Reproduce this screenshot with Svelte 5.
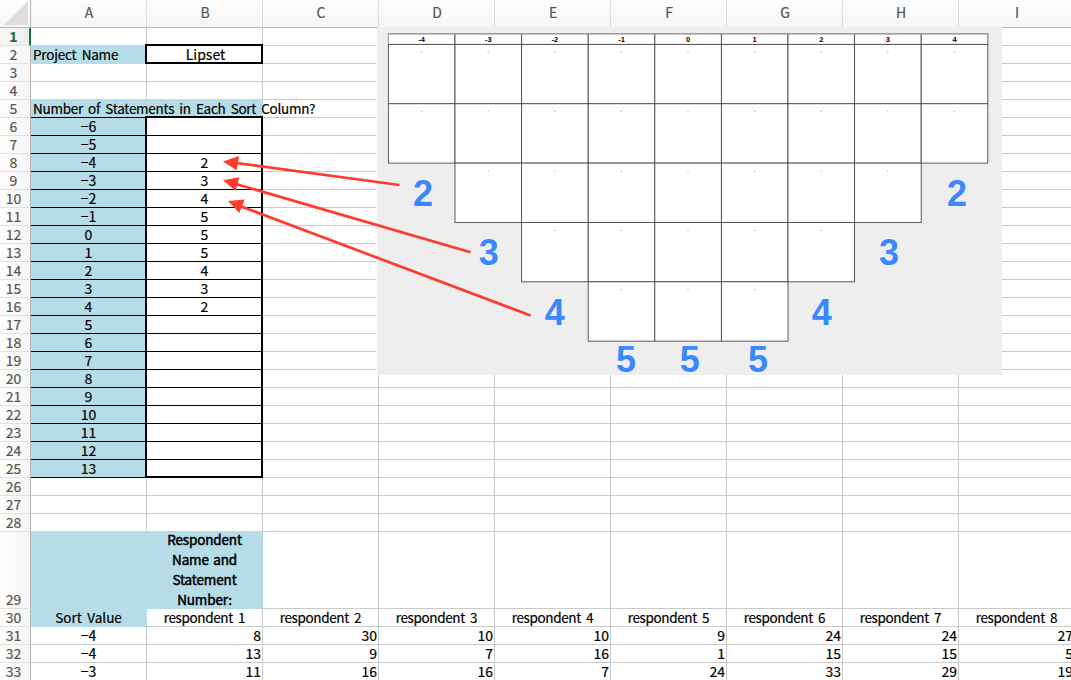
<script>
  const cols = ['A', 'B', 'C', 'D', 'E', 'F', 'G', 'H', 'I'];
  const sortLabels = Array.from({ length: 20 }, (_, i) => (i < 6 ? '−' + (6 - i) : String(i - 6)));
  const counts = ['', '', '2', '3', '4', '5', '5', '5', '4', '3', '2'];
  const data = {
    31: ['−4', 8, 30, 10, 10, 9, 24, 24, 27],
    32: ['−4', 13, 9, 7, 16, 1, 15, 15, 5],
    33: ['−3', 11, 16, 16, 7, 24, 33, 29, 19]
  };

  function cell(r, c) {
    if (r === 2 && c === 0) return { t: 'Project Name', k: 'fill left text' };
    if (r === 2 && c === 1) return { t: 'Lipset', k: 'lipset' };
    if (r === 5 && c === 0) return { t: 'Number of Statements in Each Sort Column?', k: 'fill left text over ruled' };
    if (r === 5 && c === 1) return { t: '', k: 'fill' };
    if (r >= 6 && r <= 25 && c === 0) return { t: sortLabels[r - 6], k: 'fill ruled' };
    if (r >= 6 && r <= 25 && c === 1) return { t: counts[r - 6] ?? '', k: 'ruled' };
    if (r === 29 && c === 0) return { t: '', k: 'fill' };
    if (r === 29 && c === 1) return { t: 'Respondent\nName and\nStatement\nNumber:', k: 'fill text wrap' };
    if (r === 30) return c === 0 ? { t: 'Sort Value', k: 'fill text sort' } : { t: 'respondent ' + c, k: 'text resp' };
    if (r > 30) return { t: data[r][c], k: c ? 'right' : '' };
    return { t: '', k: '' };
  }

  const rows = Array.from({ length: 33 }, (_, i) => ({
    n: i + 1,
    cells: cols.map((_, c) => cell(i + 1, c))
  }));

  const step = 66.6;
  const x0 = 388.4;
  const depth = [2, 3, 4, 5, 5, 5, 4, 3, 2];
  const boxes = depth.flatMap((d, c) =>
    Array.from({ length: d }, (_, r) => ({ x: x0 + c * step, y: 44.4 + r * 59.35 }))
  );
  const marks = [
    [2, 423, 206], [3, 488.7, 264.6], [4, 554.7, 324.7], [5, 626, 371.8], [5, 689.7, 371.8],
    [5, 758, 371.8], [4, 821.7, 324.7], [3, 889, 264.6], [2, 957, 206.3]
  ];
  const arrows = [
    { line: [399.5, 185, 236, 163], head: '223,161.5 239,156 236.7,170.3' },
    { line: [470.5, 252.3, 236, 184], head: '223,180.2 239.4,177.3 235.6,191' },
    { line: [530.5, 315.5, 240, 206], head: '228,201 244.6,199.4 239.3,213' }
  ];
</script>

<main class="sheet">
  <div class="row head">
    <div class="corner"><svg width="30" height="27"><polygon points="4,25 28,25 28,1" /></svg></div>
    {#each cols as c}<div class="col">{c}</div>{/each}
  </div>
  {#each rows as row}
    <div class="row" class:tall={row.n === 29}>
      <div class="num" class:active={row.n === 1}><span>{row.n}</span></div>
      {#each row.cells as c}
        <div class="cell {c.k}"><span>{c.t}</span></div>
      {/each}
    </div>
  {/each}

  <div class="box"></div>
  <div class="box name-box"></div>

  <svg class="overlay" width="1071" height="680">
    <rect x="376" y="28" width="2" height="347" fill="#fafafa" />
    <rect x="377.4" y="27" width="624.6" height="348" fill="#eeeeee" />
    {#each depth as _, c}
      <rect class="slot" x={x0 + c * step} y="33.8" width={step} height="10.6" />
      <text class="slot-label" x={x0 + (c + 0.5) * step} y="42.2">{String(c - 4)}</text>
    {/each}
    {#each boxes as b}
      <rect class="slot" x={b.x} y={b.y} width={step} height="59.35" />
      <rect x={b.x + 32.6} y={b.y + 7.4} width="1.2" height="1" fill="#a5a5a5" />
    {/each}
    <path d="M388.4 44V33.8H987.8V44" fill="none" stroke="#aaa" />
    {#each marks as [n, x, y]}<text class="mark" {x} {y}>{n}</text>{/each}
    {#each arrows as a}
      <line class="shaft" x1={a.line[0]} y1={a.line[1]} x2={a.line[2]} y2={a.line[3]} />
      <polygon class="tip" points={a.head} />
    {/each}
  </svg>
</main>

<style>
  :global(body) { margin: 0; overflow: hidden; background: #fff; }
  .sheet {
    position: relative;
    width: 1071px;
    height: 680px;
    overflow: hidden;
    font: 14px/17px "Noto Sans CJK JP", sans-serif;
    color: #000;
    -webkit-text-stroke: 0.2px currentColor;
  }
  .row { display: grid; grid-template-columns: 31px repeat(9, 116px); grid-template-rows: 18px; height: 18px; }
  .row.tall { height: 77px; grid-template-rows: 77px; }
  .row.head { height: 28px; grid-template-rows: 28px; background: linear-gradient(#fdfdfd, #f5f5f5); }
  .corner, .col { box-sizing: border-box; border-right: 1px solid #dedede; border-bottom: 1px solid #b8b8b8; }
  .corner { border-right-color: #b5b5b5; }
  .corner svg { display: block; }
  .corner polygon { fill: #dedede; }
  .col { text-align: center; line-height: 25px; color: #555; padding-left: 1px; }
  .num {
    box-sizing: border-box;
    display: flex;
    align-items: flex-end;
    justify-content: center;
    padding-right: 3px;
    border-right: 1px solid #b5b5b5;
    border-bottom: 1px solid #e2e2e2;
    background: linear-gradient(90deg, #fdfdfd, #f5f5f5);
    color: #555;
  }
  .num span { height: 17px; }
  .num.active { color: #217346; font-weight: bold; border-right: 2px solid #217346; padding-right: 2px; background: linear-gradient(90deg, #f7f7f7, #ececec); }
  .cell {
    box-sizing: border-box;
    height: 100%;
    border-right: 1px solid #cacaca;
    border-bottom: 1px solid #cacaca;
    text-align: center;
    white-space: pre;
  }
  .cell span { display: block; height: 17px; }
  .lipset { padding-left: 2px; }
  .fill { margin-top: -1px; padding-top: 1px; height: calc(100% + 1px); background: #b6dde7; border-color: #b6dde7; }
  .ruled { border-bottom-color: #000; }
  .fill.ruled { margin-top: 0; padding-top: 0; height: 100%; }
  .over.fill.ruled { margin-top: -1px; padding-top: 1px; height: calc(100% + 1px); }
  .text { font-size: 13.5px; }
  .left { text-align: left; padding-left: 2px; letter-spacing: -0.2px; word-spacing: 2.4px; }
  .left span { position: relative; z-index: 1; }
  .over { letter-spacing: -0.27px; }
  .resp { letter-spacing: -0.38px; word-spacing: 2.6px; }
  .sort { letter-spacing: 0; word-spacing: 2.5px; }
  .right { text-align: right; padding-right: 1px; }
  .wrap { line-height: 20px; -webkit-text-stroke: 0.5px #000; letter-spacing: -0.15px; word-spacing: 1.5px; padding-top: 0; }
  .wrap span { height: 77px; margin-top: -2px; }
  .box { position: absolute; left: 145px; top: 116px; width: 114px; height: 358px; border: 2px solid #000; }
  .name-box { top: 44px; height: 16px; }
  .overlay { position: absolute; left: 0; top: 0; -webkit-text-stroke: 0; }
  .slot { fill: #fff; stroke: #4a4a4a; stroke-width: 0.9; }
  .slot-label { font: bold 7.5px "Liberation Sans", Arial, sans-serif; text-anchor: middle; }
  .mark { font: bold 36px "Liberation Sans", Arial, sans-serif; text-anchor: middle; fill: #3a87fe; }
  .shaft { stroke: #ff3b2f; stroke-width: 2.7; }
  .tip { fill: #ff3b2f; }
</style>
